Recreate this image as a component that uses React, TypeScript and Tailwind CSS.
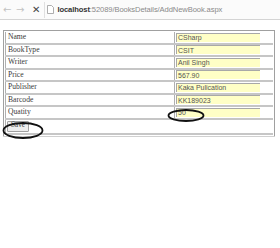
import React from 'react';

const fields = [
  { label: 'Name', value: 'CSharp' },
  { label: 'BookType', value: 'CSIT' },
  { label: 'Writer', value: 'Anil Singh' },
  { label: 'Price', value: '567.90' },
  { label: 'Publisher', value: 'Kaka Pulication' },
  { label: 'Barcode', value: 'KK189023' },
  { label: 'Quatity', value: '50' },
];

const App: React.FC = () => {
  return (
    <div className="w-[280px] h-[248px] bg-white overflow-hidden">
      {/* browser toolbar */}
      <div className="h-[20px] flex items-center border-b border-[#d4d4d4] bg-[#fbfbfb]">
        <span className="ml-[3px] w-[10px] text-[10px] leading-none text-[#c2c2c2] font-['DejaVu_Sans',sans-serif]">←</span>
        <span className="ml-[3px] w-[10px] text-[10px] leading-none text-[#c2c2c2] font-['DejaVu_Sans',sans-serif]">→</span>
        <span className="ml-[6px] text-[10px] leading-none font-bold text-[#444] font-['DejaVu_Sans',sans-serif]">✕</span>
        <div className="ml-[4px] h-[16px] flex-1 flex items-center border-l border-[#e0e0e0] pl-[2px]">
          <svg width="7" height="9" viewBox="0 0 7 9" className="mr-[3px]">
            <path d="M0.5 0.5 H4.5 L6.5 2.5 V8.5 H0.5 Z" fill="white" stroke="#999" strokeWidth="0.8" />
          </svg>
          <span className="text-[7.6px] leading-none font-['Liberation_Sans',sans-serif] tracking-[-0.1px]">
            <span className="text-[#333] font-bold">localhost</span>
            <span className="text-[#8a8a8a]">:52089/BooksDetails/AddNewBook.aspx</span>
          </span>
        </div>
      </div>

      {/* form table */}
      <div className="relative mt-[10px] ml-[3px] w-[272px] border border-[#a0a0a0] border-b-0 p-[1px]">
        {fields.map((f) => (
          <div key={f.label} className="flex h-[12.5px] border-b-[2px] border-[#c6c6c6]">
            <div className="w-[169px] flex items-center pl-[2px] border-l border-[#b0b0b0] text-[7.6px] leading-none text-[#3a3a3a] font-['Liberation_Serif',serif]">
              {f.label}
            </div>
            <div className="flex-1 flex items-center pl-[1px] border-l border-[#b0b0b0]">
              <div className="w-[84px] h-[9px] bg-[#ffffc6] border-t border-l border-[#a8a8a8] flex items-center pl-[1px] text-[7px] leading-none text-[#555] font-['Liberation_Sans',sans-serif]">
                {f.value}
              </div>
            </div>
          </div>
        ))}
        <div className="h-[15px] flex items-center pl-[1px] border-l border-[#b0b0b0] border-b-[2px] border-b-[#c6c6c6]">
          <button className="h-[11px] w-[22px] bg-[#ededed] border border-[#a0a0a0] rounded-[1px] text-[7.2px] leading-none text-[#333] font-['Liberation_Serif',serif]">
            Save
          </button>
        </div>

        {/* annotation ellipses */}
        <svg className="absolute left-[-3px] top-[-1px] pointer-events-none" width="280" height="120" viewBox="0 0 280 120">
          <ellipse cx="22" cy="100.5" rx="19.5" ry="7.5" fill="none" stroke="#111" strokeWidth="1.8" />
          <ellipse cx="185" cy="85.5" rx="17.5" ry="5.5" fill="none" stroke="#111" strokeWidth="1.8" />
        </svg>
      </div>
      <div className="ml-[3px] w-[272px] h-[1px] bg-[#d0d0d0]" />
    </div>
  );
};

export default App;
